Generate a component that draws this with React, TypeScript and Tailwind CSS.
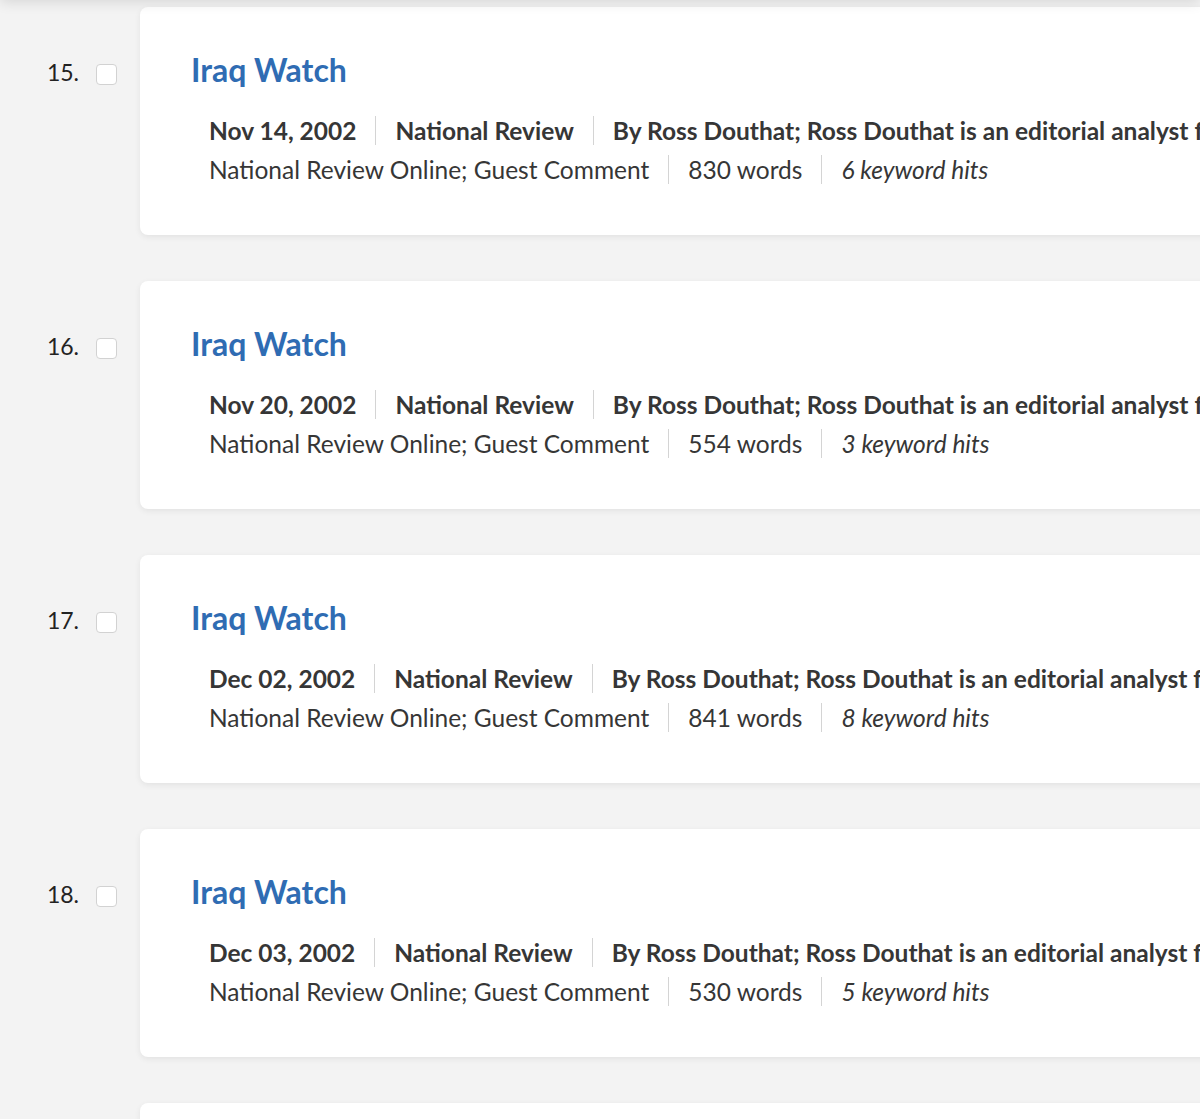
import React from "react";

interface ResultItem {
  index: number;
  title: string;
  date: string;
  source: string;
  byline: string;
  section: string;
  words: number;
  hits: number;
}

const BYLINE =
  "By Ross Douthat; Ross Douthat is an editorial analyst for National Review Online";

const results: ResultItem[] = [
  { index: 15, title: "Iraq Watch", date: "Nov 14, 2002", source: "National Review", byline: BYLINE, section: "National Review Online; Guest Comment", words: 830, hits: 6 },
  { index: 16, title: "Iraq Watch", date: "Nov 20, 2002", source: "National Review", byline: BYLINE, section: "National Review Online; Guest Comment", words: 554, hits: 3 },
  { index: 17, title: "Iraq Watch", date: "Dec 02, 2002", source: "National Review", byline: BYLINE, section: "National Review Online; Guest Comment", words: 841, hits: 8 },
  { index: 18, title: "Iraq Watch", date: "Dec 03, 2002", source: "National Review", byline: BYLINE, section: "National Review Online; Guest Comment", words: 530, hits: 5 },
  { index: 19, title: "Iraq Watch", date: "Dec 05, 2002", source: "National Review", byline: BYLINE, section: "National Review Online; Guest Comment", words: 612, hits: 4 },
];

function Divider() {
  return <span className="mx-[19px] h-[29px] w-px shrink-0 self-center bg-[#d4d4d4]" />;
}

function ResultRow({ item }: { item: ResultItem }) {
  return (
    <div className="flex items-start">
      {/* Index + select box */}
      <div className="flex w-[140px] shrink-0 items-start justify-end gap-[17px] pr-[23px]">
        <span className="mt-[51px] text-[23px] leading-[28px] text-[#222]">{item.index}.</span>
        <span className="mt-[57px] h-[21px] w-[21px] rounded-[4px] border border-[#d2d2d2] bg-white" />
      </div>

      {/* Card */}
      <div className="h-[228px] w-[1160px] shrink-0 rounded-[8px] bg-white pl-[51px] pt-[43px] shadow-[0_2px_6px_rgba(0,0,0,0.07)]">
        <a className="block text-[32px] font-bold leading-[40px] text-[#2f6cb3]">{item.title}</a>

        <div className="ml-[18px] mt-[21px] text-[24.5px] leading-[39px] text-[#363636]">
          <div className="flex whitespace-nowrap font-bold">
            <span>{item.date}</span>
            <Divider />
            <span>{item.source}</span>
            <Divider />
            <span>{item.byline}</span>
          </div>
          <div className="flex whitespace-nowrap">
            <span>{item.section}</span>
            <Divider />
            <span>{item.words} words</span>
            <Divider />
            <span className="italic">{item.hits} keyword hits</span>
          </div>
        </div>
      </div>
    </div>
  );
}

export default function App() {
  return (
    <div className="relative h-[1119px] w-full overflow-hidden bg-[#f3f3f3] font-['Lato',sans-serif]">
      {/* header sits above the fold; only its shadow shows */}
      <div className="absolute -top-[40px] left-0 z-10 h-[40px] w-full bg-[#dcdcdc] shadow-[0_2px_14px_rgba(0,0,0,0.12)]" />

      <div className="flex flex-col gap-[46px] pt-[7px]">
        {results.map((item) => (
          <ResultRow key={item.index} item={item} />
        ))}
      </div>
    </div>
  );
}
